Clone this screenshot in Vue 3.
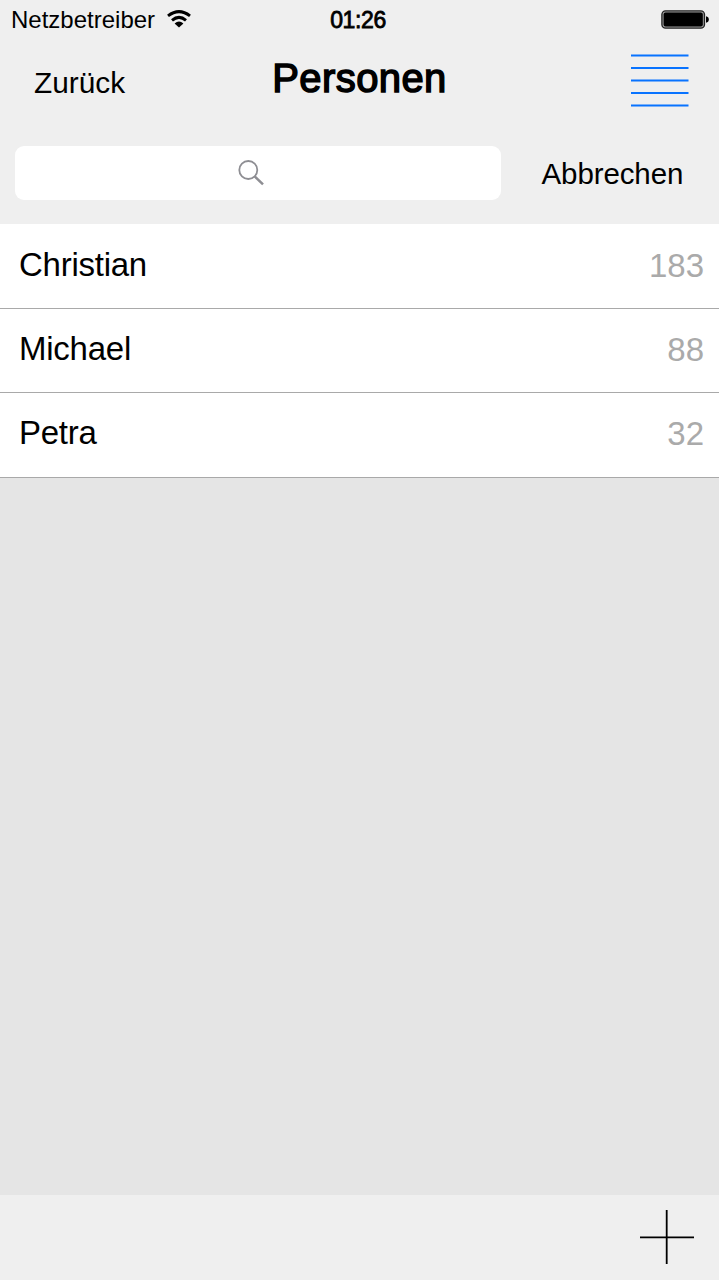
<script setup>
const people = [
  { name: 'Christian', count: 183 },
  { name: 'Michael', count: 88 },
  { name: 'Petra', count: 32 },
]
</script>

<template>
  <div class="screen">
    <header class="top">
      <div class="status">
        <div class="carrier">
          <span>Netzbetreiber</span>
          <svg class="wifi" width="24" height="18" viewBox="0 0 24 18">
            <path d="M1 5.9Q12-2.6 23 5.9" fill="none" stroke="#000" stroke-width="3" />
            <path d="M5 10.3Q12 4.4 19 10.3" fill="none" stroke="#000" stroke-width="3" />
            <path d="M7.6 13.4Q12 9.4 16.4 13.4L12 17.6Z" />
          </svg>
        </div>
        <span class="time">01:26</span>
        <svg class="battery" width="48" height="20" viewBox="0 0 48 20">
          <rect x="0.9" y="0.9" width="42.6" height="17.2" rx="3.6" fill="#9a9a9a" stroke="#222" stroke-width="1.3" />
          <rect x="2.6" y="2.6" width="39.2" height="13.8" rx="2" />
          <path d="M45 6.2q2.8.6 2.8 3.3T45 12.8Z" />
        </svg>
      </div>
      <nav class="navbar">
        <span class="back">Zurück</span>
        <h1>Personen</h1>
        <svg class="menu" width="58" height="54" viewBox="0 0 58 54">
          <path d="M0 1.5H57.5M0 14H57.5M0 26.5H57.5M0 39H57.5M0 51.5H57.5" stroke="#0873ff" stroke-width="2" />
        </svg>
      </nav>
      <div class="search">
        <div class="field">
          <svg width="28" height="28" viewBox="0 0 28 28" fill="none" stroke="#8e8e93">
            <circle cx="10.3" cy="10" r="9" stroke-width="1.8" />
            <path d="M16.7 16.4L25 24.3" stroke-width="2.5" />
          </svg>
        </div>
        <span class="cancel">Abbrechen</span>
      </div>
    </header>
    <main>
      <ul>
        <li v-for="p in people" :key="p.name">
          <span class="name">{{ p.name }}</span>
          <span class="count">{{ p.count }}</span>
        </li>
      </ul>
    </main>
    <footer>
      <svg width="54" height="54" viewBox="0 0 54 54">
        <path d="M0 27.3H54M26.7 0V54" stroke="#000" stroke-width="1.8" />
      </svg>
    </footer>
  </div>
</template>

<style>
body {
  margin: 0;
}
</style>

<style scoped>
.screen {
  width: 719px;
  height: 1280px;
  display: flex;
  flex-direction: column;
  background: #e5e5e5;
  color: #000;
  font-family: "Liberation Sans", Arial, sans-serif;
  overflow: hidden;
}
svg {
  display: block;
}
.top {
  height: 224px;
  background: #efefef;
}
.status {
  height: 40px;
  display: grid;
  grid-template-columns: 1fr auto 1fr;
  align-items: start;
  padding: 0 10px 0 11px;
  line-height: 40px;
}
.carrier {
  display: flex;
  font-size: 24px;
}
.wifi {
  margin: 10px 0 0 12px;
}
.time {
  font-size: 23px;
  -webkit-text-stroke: 0.8px #000;
  letter-spacing: -0.4px;
  margin-right: 4px;
}
.battery {
  justify-self: end;
  margin-top: 10px;
}
.navbar {
  height: 106px;
  display: grid;
  grid-template-columns: 1fr auto 1fr;
  align-items: start;
  padding: 0 30px 0 34px;
}
.back {
  font-size: 29.8px;
  line-height: 85px;
}
h1 {
  margin: 0 4px 0 0;
  font-size: 40px;
  line-height: 76px;
  font-weight: 400;
  -webkit-text-stroke: 1.5px #000;
  letter-spacing: 0.4px;
}
.menu {
  justify-self: end;
  margin-top: 14px;
}
.search {
  height: 54px;
  display: flex;
  padding-left: 15px;
}
.field {
  width: 485.5px;
  height: 53.5px;
  border-radius: 9px;
  background: #fff;
  box-sizing: border-box;
  padding: 14px 0 0 223px;
}
.cancel {
  margin-left: 41px;
  font-size: 29.5px;
  letter-spacing: -0.1px;
  line-height: 55px;
}
ul {
  list-style: none;
  margin: 0;
  padding: 0.5px 0 0;
  background: #fff;
}
li {
  height: 84.4px;
  box-sizing: border-box;
  display: flex;
  justify-content: space-between;
  padding: 0 15px 0 19px;
  background: #fff;
  border-bottom: 1px solid #a9a9a9;
  font-size: 33px;
}
.name {
  line-height: 80.6px;
  letter-spacing: -0.25px;
}
.count {
  line-height: 82.6px;
  color: #aaa;
}
main {
  flex: 1;
}
footer {
  height: 85px;
  box-sizing: border-box;
  display: flex;
  justify-content: flex-end;
  padding: 15px 25px 0 0;
  background: #efefef;
}
</style>
